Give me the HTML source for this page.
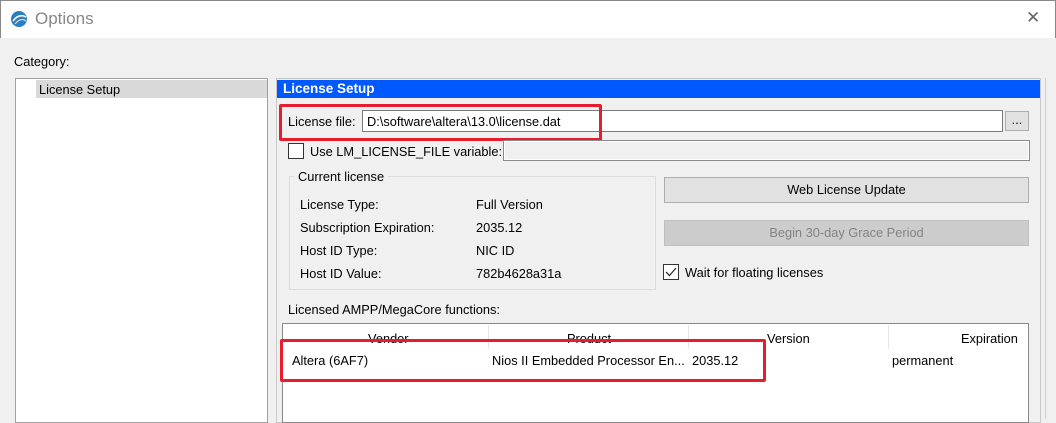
<!DOCTYPE html>
<html><head><style>
*{margin:0;padding:0;box-sizing:border-box}
body{width:1056px;height:419px;overflow:hidden;background:#f0f0f0;font-family:"Liberation Sans",sans-serif;font-size:12.8px;color:#000;position:relative}
.a{position:absolute;white-space:nowrap}
.red{position:absolute;border:3px solid #e81c2c;border-radius:2px}
</style></head><body>
<div class="a" style="left:0;top:0;width:1056px;height:38px;background:#fff;border-top:1px solid #888;border-left:1px solid #888;border-right:1px solid #888"></div>
<svg class="a" style="left:9px;top:9px" width="20" height="20" viewBox="0 0 20 20"><circle cx="10" cy="10" r="8" fill="#2a7fc0"/><path d="M4 12 Q10 4 17 8" stroke="#fff" stroke-width="1.5" fill="none"/><path d="M6 15 Q12 8 17 12" stroke="#cde" stroke-width="1.2" fill="none"/></svg>
<div class="a" style="left:35px;top:9px;font-size:17px;color:#888">Options</div>
<div class="a" style="left:1026px;top:8px;font-size:17px;color:#666">✕</div>
<div class="a" style="left:14px;top:54px">Category:</div>
<div class="a" style="left:15px;top:78px;width:253px;height:345px;background:#fff;border:1px solid #a0a0a0"></div>
<div class="a" style="left:36px;top:80px;width:231px;height:18px;background:#d9d9d9"></div>
<div class="a" style="left:39px;top:82px">License Setup</div>
<div class="a" style="left:276px;top:78px;width:765px;height:345px;border:1px solid #c8c8c8"></div>
<div class="a" style="left:277px;top:80px;width:763px;height:18px;background:#0058ff"></div>
<div class="a" style="left:283px;top:81px;color:#fff;font-weight:bold;font-size:13.5px">License Setup</div>
<div class="a" style="left:1045px;top:78px;width:1px;height:341px;background:#ccc"></div>
<div class="a" style="left:288px;top:114px">License file:</div>
<div class="a" style="left:362px;top:110px;width:641px;height:22px;background:#fff;border:1px solid #7a7a7a"></div>
<div class="a" style="left:367px;top:114px">D:\software\altera\13.0\license.dat</div>
<div class="a" style="left:1005px;top:111px;width:24px;height:20px;background:#e1e1e1;border:1px solid #adadad;text-align:center;line-height:16px">...</div>
<div class="red" style="left:279px;top:104px;width:323px;height:37px"></div>
<div class="a" style="left:288px;top:143px;width:16px;height:16px;background:#fff;border:1px solid #333"></div>
<div class="a" style="left:310px;top:144px">Use LM_LICENSE_FILE variable:</div>
<div class="a" style="left:503px;top:140px;width:527px;height:21px;background:#f0f0f0;border:1px solid #8a8a8a;box-shadow:inset 0 0 0 1px #fff"></div>
<div class="a" style="left:289px;top:176px;width:367px;height:114px;border:1px solid #dcdcdc"></div>
<div class="a" style="left:294px;top:169px;background:#f0f0f0;padding:0 4px">Current license</div>
<div class="a" style="left:300px;top:197px">License Type:</div><div class="a" style="left:476px;top:197px">Full Version</div>
<div class="a" style="left:300px;top:220px">Subscription Expiration:</div><div class="a" style="left:476px;top:220px">2035.12</div>
<div class="a" style="left:300px;top:243px">Host ID Type:</div><div class="a" style="left:476px;top:243px">NIC ID</div>
<div class="a" style="left:300px;top:266px">Host ID Value:</div><div class="a" style="left:476px;top:266px">782b4628a31a</div>
<div class="a" style="left:664px;top:177px;width:365px;height:26px;background:#e1e1e1;border:1px solid #adadad;text-align:center;line-height:24px">Web License Update</div>
<div class="a" style="left:664px;top:220px;width:365px;height:26px;background:#cccccc;border:1px solid #bfbfbf;text-align:center;line-height:24px;color:#838383">Begin 30-day Grace Period</div>
<div class="a" style="left:663px;top:264px;width:16px;height:16px;background:#fff;border:1px solid #333"></div>
<svg class="a" style="left:664px;top:265px" width="14" height="14"><path d="M2 7 L5.5 10.5 L12 3" stroke="#333" stroke-width="1.3" fill="none"/></svg>
<div class="a" style="left:685px;top:265px">Wait for floating licenses</div>
<div class="a" style="left:288px;top:302px">Licensed AMPP/MegaCore functions:</div>
<div class="a" style="left:282px;top:323px;width:747px;height:100px;background:#fff;border:1px solid #888"></div>
<div class="a" style="left:488px;top:325px;width:1px;height:24px;background:#e5e5e5"></div>
<div class="a" style="left:688px;top:325px;width:1px;height:24px;background:#e5e5e5"></div>
<div class="a" style="left:888px;top:325px;width:1px;height:24px;background:#e5e5e5"></div>
<div class="a" style="left:368px;top:331px">Vendor</div>
<div class="a" style="left:567px;top:331px">Product</div>
<div class="a" style="left:767px;top:331px">Version</div>
<div class="a" style="left:961px;top:331px">Expiration</div>
<div class="a" style="left:292px;top:353px">Altera (6AF7)</div>
<div class="a" style="left:492px;top:353px">Nios II Embedded Processor En...</div>
<div class="a" style="left:692px;top:353px">2035.12</div>
<div class="a" style="left:892px;top:353px">permanent</div>
<div class="red" style="left:280px;top:339px;width:486px;height:43px"></div>
</body></html>
